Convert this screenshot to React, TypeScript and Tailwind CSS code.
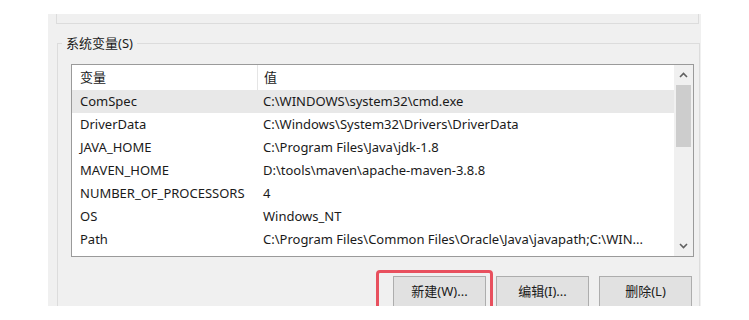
import React from "react";

const FONT = "font-['Noto_Sans','Noto_Sans_CJK_SC',sans-serif]";

const VARS: { name: string; value: string }[] = [
  { name: "ComSpec", value: "C:\\WINDOWS\\system32\\cmd.exe" },
  { name: "DriverData", value: "C:\\Windows\\System32\\Drivers\\DriverData" },
  { name: "JAVA_HOME", value: "C:\\Program Files\\Java\\jdk-1.8" },
  { name: "MAVEN_HOME", value: "D:\\tools\\maven\\apache-maven-3.8.8" },
  { name: "NUMBER_OF_PROCESSORS", value: "4" },
  { name: "OS", value: "Windows_NT" },
  { name: "Path", value: "C:\\Program Files\\Common Files\\Oracle\\Java\\javapath;C:\\WIN..." },
];

function Chevron({ up }: { up?: boolean }) {
  return (
    <svg width="9" height="6" viewBox="0 0 9 6" aria-hidden="true">
      <path
        d={up ? "M1 5L4.5 1.5L8 5" : "M1 1L4.5 4.5L8 1"}
        fill="none"
        stroke="#606060"
        strokeWidth="1.6"
      />
    </svg>
  );
}

function WinButton({ label }: { label: string }) {
  return (
    <button
      type="button"
      className="flex h-[32px] w-[93px] items-start justify-center border border-[#adadad] bg-[#e1e1e1] pt-[5px] text-[13px] text-[#1a1a1a]"
    >
      {label}
    </button>
  );
}

export default function App() {
  return (
    <div className={`h-[320px] w-[749px] bg-white pl-[48px] pt-[14px] ${FONT}`}>
      <div className="relative h-[292px] w-[653px] overflow-hidden bg-[#f0f0f0]">
        {/* bottom edge of the user variables group above */}
        <div className="ml-[8px] h-[10px] w-[643px] border-x border-b border-[#dcdcdc]" />

        <fieldset className="ml-[9px] mt-[11px] w-[643px] border border-[#dcdcdc] pb-4 pl-[13px] pr-[5px] pt-[13px]">
          <legend className="-ml-[9px] px-[4px] text-[13px] leading-[16px] text-[#1a1a1a]">系统变量(S)</legend>

          <div className="flex h-[193px] w-[623px] border border-[#9a9a9a] bg-white text-[13px] text-[#1a1a1a]">
            <div className="flex-1">
              <div className="grid h-[25px] grid-cols-[185px_1fr] items-center">
                <span className="pl-[8px]">变量</span>
                <span className="flex h-full items-center border-l border-[#e5e5e5] pl-[6px]">值</span>
              </div>
              {VARS.map((row, i) => (
                <div
                  key={row.name}
                  className={`grid h-[23px] grid-cols-[185px_1fr] items-center ${i === 0 ? "bg-[#e8e8e8]" : ""}`}
                >
                  <span className="whitespace-nowrap pl-[8px]">{row.name}</span>
                  <span className="whitespace-nowrap pl-[6px]">{row.value}</span>
                </div>
              ))}
            </div>
            <div className="flex w-[19px] flex-col items-center bg-[#f0f0f0]">
              <div className="flex h-[20px] items-center justify-center">
                <Chevron up />
              </div>
              <div className="h-[62px] w-[15px] bg-[#cdcdcd]" />
              <div className="flex-1" />
              <div className="flex h-[20px] items-center justify-center">
                <Chevron />
              </div>
            </div>
          </div>

          <div className="mt-[19px] flex w-[623px] justify-end gap-[10px] pr-[2px]">
            <WinButton label="新建(W)..." />
            <WinButton label="编辑(I)..." />
            <WinButton label="删除(L)" />
          </div>
        </fieldset>

        {/* red annotation frame around the 新建 button */}
        <div className="absolute left-[328px] top-[256px] h-[50px] w-[117px] rounded-t-[4px] border-[3px] border-[#e8505e]" />
      </div>
    </div>
  );
}
